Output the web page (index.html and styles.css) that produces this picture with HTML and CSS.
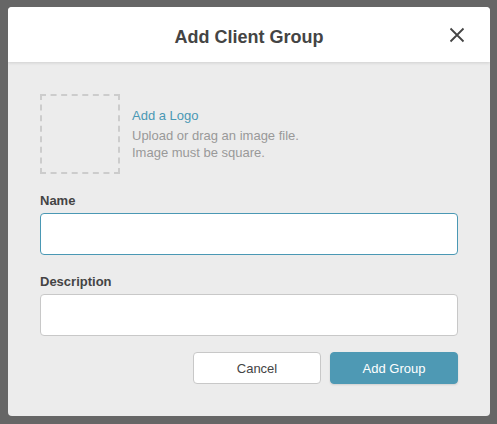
FILE: index.html
```html
<!DOCTYPE html>
<html>
<head>
<meta charset="utf-8">
<link rel="stylesheet" href="styles.css">
</head>
<body>
<div class="modal">
  <div class="modal-header">
    <h1 class="title">Add Client Group</h1>
    <button class="close" aria-label="Close">
      <svg width="16" height="16" viewBox="0 0 16 16"><path d="M1.5 1.5L14.5 14.5M14.5 1.5L1.5 14.5" stroke="#444" stroke-width="1.8" fill="none" stroke-linecap="butt"/></svg>
    </button>
  </div>
  <div class="modal-body">
    <div class="logo-row">
      <div class="logo-box"></div>
      <div class="logo-text">
        <a class="logo-link">Add a Logo</a>
        <p class="hint">Upload or drag an image file.<br>Image must be square.</p>
      </div>
    </div>
    <label class="field-label">Name</label>
    <div class="input focused"></div>
    <label class="field-label">Description</label>
    <div class="input"></div>
    <div class="actions">
      <button class="btn btn-cancel">Cancel</button>
      <button class="btn btn-primary">Add Group</button>
    </div>
  </div>
</div>
</body>
</html>
```
FILE: styles.css
```css
html, body {
  margin: 0;
  padding: 0;
  background: #666666;
  font-family: "Liberation Sans", Arial, sans-serif;
}
body {
  width: 497px;
  height: 424px;
  overflow: hidden;
}
.modal {
  margin: 7px 0 0 8px;
  width: 482px;
  height: 409px;
  background: #ececec;
  border-radius: 4px;
  overflow: hidden;
}
.modal-header {
  height: 55px;
  background: #ffffff;
  display: flex;
  align-items: center;
  justify-content: center;
  position: relative;
  box-shadow: 0 1px 3px rgba(0,0,0,0.12);
}
.title {
  margin: 5px 0 0 0;
  font-size: 18px;
  font-weight: bold;
  color: #444444;
}
.close {
  position: absolute;
  right: 25px;
  top: 20px;
  width: 16px;
  height: 16px;
  padding: 0;
  border: 0;
  background: none;
  display: flex;
}
.modal-body {
  padding: 32px 32px 0 32px;
}
.logo-row {
  display: flex;
  align-items: center;
  gap: 12px;
}
.logo-box {
  width: 76px;
  height: 76px;
  border: 2px dashed #cccccc;
  box-sizing: content-box;
}
.logo-link {
  display: block;
  font-size: 13px;
  color: #4a98b4;
  line-height: 17px;
}
.hint {
  margin: 3px 0 0 0;
  font-size: 13px;
  line-height: 17px;
  color: #999999;
}
.field-label {
  display: block;
  font-size: 13px;
  font-weight: bold;
  color: #444444;
  margin-top: 19px;
  line-height: 16px;
}
.input {
  margin-top: 4px;
  height: 40px;
  background: #ffffff;
  border: 1px solid #c8c8c8;
  border-radius: 4px;
}
.input.focused {
  border-color: #4a98b4;
}
.actions {
  display: flex;
  justify-content: flex-end;
  gap: 9px;
  margin-top: 16px;
}
.btn {
  width: 128px;
  height: 32px;
  border-radius: 4px;
  font-family: "Liberation Sans", Arial, sans-serif;
  font-size: 13px;
  padding: 0;
}
.btn-cancel {
  background: #ffffff;
  border: 1px solid #c8c8c8;
  color: #444444;
}
.btn-primary {
  background: #4e99b4;
  border: 1px solid #4e99b4;
  color: #ffffff;
  box-shadow: 0 1px 2px rgba(0,0,0,0.12);
}
```
